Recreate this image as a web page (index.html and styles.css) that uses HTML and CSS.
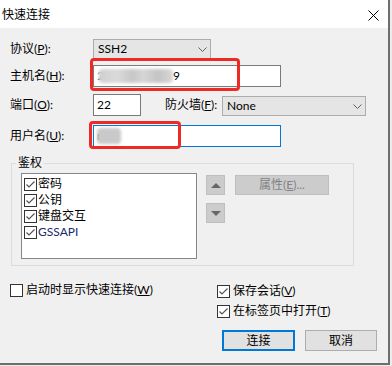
FILE: index.html
```html
<!DOCTYPE html>
<html>
<head>
    <title>快速连接</title>
    <link rel="stylesheet" href="styles.css">
</head>
<body>
    <div class="dialog">
        <div class="titlebar">
            <span class="title">快速连接</span>
            <svg class="close" width="11" height="11" viewBox="0 0 11 11">
                <path d="M0.5 0.5 L10.5 10.5 M10.5 0.5 L0.5 10.5" stroke="#000" stroke-width="1" fill="none"/>
            </svg>
        </div>

        <div class="form">
            <div class="row row-proto">
                <label class="lbl">协议<span class="key">(<u>P</u>):</span></label>
                <div class="combo combo-proto">
                    <span>SSH2</span>
                    <svg width="9" height="5" viewBox="0 0 9 5"><path d="M0.5 0.5 L4.5 4.5 L8.5 0.5" stroke="#606060" fill="none"/></svg>
                </div>
            </div>

            <div class="row row-host">
                <label class="lbl">主机名<span class="key">(<u>H</u>):</span></label>
                <div class="edit edit-wide">
                    <span class="peek">2</span><span class="blur blur-host"></span><span>9</span>
                </div>
            </div>

            <div class="row row-port">
                <label class="lbl">端口<span class="key">(<u>O</u>):</span></label>
                <div class="edit edit-port">22</div>
                <label class="lbl-fw">防火墙<span class="key">(<u>F</u>):</span></label>
                <div class="combo combo-fw">
                    <span>None</span>
                    <svg width="9" height="5" viewBox="0 0 9 5"><path d="M0.5 0.5 L4.5 4.5 L8.5 0.5" stroke="#606060" fill="none"/></svg>
                </div>
            </div>

            <div class="row row-user">
                <label class="lbl">用户名<span class="key">(<u>U</u>):</span></label>
                <div class="edit edit-wide edit-focus">
                    <span>r</span><span class="blur blur-user"></span>
                </div>
            </div>

            <fieldset class="auth">
                <legend>鉴权</legend>
                <div class="auth-inner">
                    <div class="list">
                        <div class="item"><span class="cb checked"></span>密码</div>
                        <div class="item"><span class="cb checked"></span>公钥</div>
                        <div class="item"><span class="cb checked"></span>键盘交互</div>
                        <div class="item"><span class="cb checked"></span><span class="gss">GSSAPI</span></div>
                    </div>
                    <div class="arrows">
                        <div class="arrow-btn"><span class="tri-up"></span></div>
                        <div class="arrow-btn"><span class="tri-down"></span></div>
                    </div>
                    <div class="props">属性<span class="key">(<u>E</u>)...</span></div>
                </div>
            </fieldset>

            <div class="opts">
                <div class="opt opt-left"><span class="cb"></span><span>启动时显示快速连接<span class="key">(<u>W</u>)</span></span></div>
                <div class="opt-right">
                    <div class="opt"><span class="cb checked"></span><span>保存会话<span class="key">(<u>V</u>)</span></span></div>
                    <div class="opt"><span class="cb checked"></span><span>在标签页中打开<span class="key">(<u>T</u>)</span></span></div>
                </div>
            </div>

            <div class="buttons">
                <div class="btn btn-default">连接</div>
                <div class="btn">取消</div>
            </div>
        </div>

        <div class="mark mark-host"></div>
        <div class="mark mark-user"></div>
    </div>
</body>
</html>
```

FILE: styles.css
```css
* {
    box-sizing: border-box;
}

html, body {
    margin: 0;
    width: 392px;
    height: 366px;
    background: #ececec;
    font-family: Lato, "Noto Sans CJK SC", sans-serif;
    font-size: 12px;
    color: #000;
    overflow: hidden;
    text-autospace: no-autospace;
}

.key {
    font-family: Lato, sans-serif;
    white-space: nowrap;
}

.dialog {
    position: relative;
    width: 390px;
    height: 365px;
    background: #f0f0f0;
    border-right: 2px solid #6e6e6e;
    border-bottom: 2px solid #6e6e6e;
}

.titlebar {
    height: 28px;
    background: #fff;
    display: flex;
    align-items: center;
    justify-content: space-between;
    padding: 0 9px 0 2px;
}

.title {
    line-height: 16px;
    margin-top: 2px;
}

.close {
    margin-top: 2px;
}

.form {
    padding-left: 10px;
}

.row {
    display: flex;
    align-items: center;
    height: 22px;
    line-height: 16px;
}

.row-proto {
    margin-top: 11px;
    height: 20px;
}

.row-host {
    margin-top: 6px;
}

.row-port {
    margin-top: 7px;
}

.row-user {
    margin-top: 9px;
}

.lbl {
    width: 83px;
}

.lbl-fw {
    margin-left: 24px;
    width: 57px;
}

.combo {
    height: 20px;
    background: #e5e5e5;
    border: 1px solid #acacac;
    display: flex;
    align-items: center;
    justify-content: space-between;
    padding: 0 3px 0 4px;
}

.combo-proto {
    width: 118px;
}

.combo-fw {
    width: 144px;
    margin-top: 2px;
    align-self: flex-end;
}

.edit {
    height: 22px;
    background: #fff;
    border: 1px solid #7a7a7a;
    padding-left: 3px;
    display: flex;
    align-items: center;
}

.edit-wide {
    width: 188px;
}

.edit-port {
    width: 48px;
}

.edit-focus {
    border-color: #0078d7;
}

.peek {
    opacity: 0.5;
}

.blur {
    display: inline-block;
    height: 14px;
    border-radius: 4px;
    filter: blur(1.6px);
}

.blur-host {
    width: 74px;
    margin-left: -5px;
    background: linear-gradient(90deg, #cfcfcf 0%, #dadada 25%, #c6c6c6 45%, #d6d6d6 60%, #c4c4c4 80%, #d8d8d8 100%);
}

.blur-user {
    width: 24px;
    height: 16px;
    margin-left: -4px;
    background: #c9c9c9;
}

.auth {
    margin: 8px 0 0 1px;
    width: 343px;
    height: 111px;
    border: 1px solid #dcdcdc;
    padding: 0 0 0 9px;
}

.auth legend {
    margin-left: -5px;
    padding: 0 2px;
    line-height: 16px;
}

.auth-inner {
    display: flex;
    align-items: flex-start;
    margin-top: 2px;
}

.list {
    width: 176px;
    height: 86px;
    background: #fff;
    border: 1px solid #828790;
    padding: 2px 0 0 2px;
}

.item {
    height: 16px;
    display: flex;
    align-items: center;
    gap: 1px;
    line-height: 16px;
}

.gss {
    color: #1a2a6e;
}

.cb {
    display: inline-block;
    width: 13px;
    height: 13px;
    flex: none;
    background: #fff;
    border: 1px solid #333;
}

.cb.checked {
    background: #fff url("data:image/svg+xml;utf8,<svg xmlns='http://www.w3.org/2000/svg' width='11' height='11' viewBox='0 0 11 11'><path d='M1.5 5.5 L4 8 L9.5 2.5' stroke='%23555' stroke-width='1.2' fill='none'/></svg>") no-repeat center;
}

.arrows {
    margin-left: 9px;
    margin-top: 2px;
    display: flex;
    flex-direction: column;
    gap: 8px;
}

.arrow-btn {
    width: 19px;
    height: 20px;
    background: #cccccc;
    border: 1px solid #bfbfbf;
    display: flex;
    align-items: center;
    justify-content: center;
}

.tri-up {
    border-left: 5px solid transparent;
    border-right: 5px solid transparent;
    border-bottom: 5px solid #666;
}

.tri-down {
    border-left: 5px solid transparent;
    border-right: 5px solid transparent;
    border-top: 5px solid #666;
}

.props {
    margin-left: 10px;
    margin-top: 2px;
    width: 94px;
    height: 20px;
    background: #cccccc;
    border: 1px solid #bfbfbf;
    color: #838383;
    display: flex;
    align-items: center;
    justify-content: center;
    line-height: 16px;
}

.opts {
    display: flex;
    align-items: flex-start;
    margin-top: 16px;
}

.opt {
    height: 16px;
    display: flex;
    align-items: center;
    gap: 3px;
    line-height: 16px;
}

.opt-left {
    width: 207px;
}

.opt-right {
    display: flex;
    flex-direction: column;
    gap: 4px;
    margin-top: 1px;
}

.buttons {
    display: flex;
    justify-content: flex-end;
    gap: 10px;
    margin-top: 11px;
    margin-right: 11px;
}

.btn {
    width: 72px;
    height: 21px;
    background: #e1e1e1;
    border: 1px solid #adadad;
    display: flex;
    align-items: center;
    justify-content: center;
    line-height: 16px;
}

.btn-default {
    width: 73px;
    border: 2px solid #0078d7;
}

.mark {
    position: absolute;
    border: 3px solid #ee2a24;
    border-radius: 4px;
}

.mark-host {
    left: 90px;
    top: 58px;
    width: 150px;
    height: 33px;
}

.mark-user {
    left: 89px;
    top: 121px;
    width: 92px;
    height: 28px;
}
```
